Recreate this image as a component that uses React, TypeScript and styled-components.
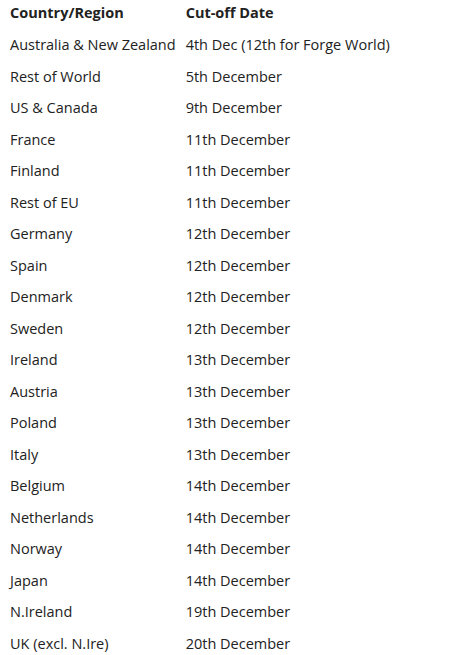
import React from 'react';
import styled, {createGlobalStyle} from "styled-components";

const GlobalStyle = createGlobalStyle`
  body {
    margin: 0;
    background: #fff;
    font-family: "Open Sans", "Noto Sans", sans-serif;
    color: #222;
  }
`

const rows: [string, string][] = [
    ["Australia & New Zealand", "4th Dec (12th for Forge World)"],
    ["Rest of World", "5th December"],
    ["US & Canada", "9th December"],
    ["France", "11th December"],
    ["Finland", "11th December"],
    ["Rest of EU", "11th December"],
    ["Germany", "12th December"],
    ["Spain", "12th December"],
    ["Denmark", "12th December"],
    ["Sweden", "12th December"],
    ["Ireland", "13th December"],
    ["Austria", "13th December"],
    ["Poland", "13th December"],
    ["Italy", "13th December"],
    ["Belgium", "14th December"],
    ["Netherlands", "14th December"],
    ["Norway", "14th December"],
    ["Japan", "14th December"],
    ["N.Ireland", "19th December"],
    ["UK (excl. N.Ire)", "20th December"],
];

const App: React.FC = () => {
    return (
        <>
            <GlobalStyle/>
            <Table>
                <thead>
                <tr>
                    <Head>Country/Region</Head>
                    <Head>Cut-off Date</Head>
                </tr>
                </thead>
                <tbody>
                {rows.map(([country, date]) => (
                    <tr key={country}>
                        <Cell>{country}</Cell>
                        <Cell>{date}</Cell>
                    </tr>
                ))}
                </tbody>
            </Table>
        </>
    );
};

const Table = styled.table`
  border-collapse: collapse;
  font-size: 14.5px;
  margin-left: 5px;
`

const Head = styled.th`
  text-align: left;
  font-weight: 700;
  height: 25px;
  padding: 0 5px 4px;
  vertical-align: middle;
`

const Cell = styled.td`
  height: 31.5px;
  padding: 0 5px;
  vertical-align: middle;
  white-space: nowrap;
`

export default App;
